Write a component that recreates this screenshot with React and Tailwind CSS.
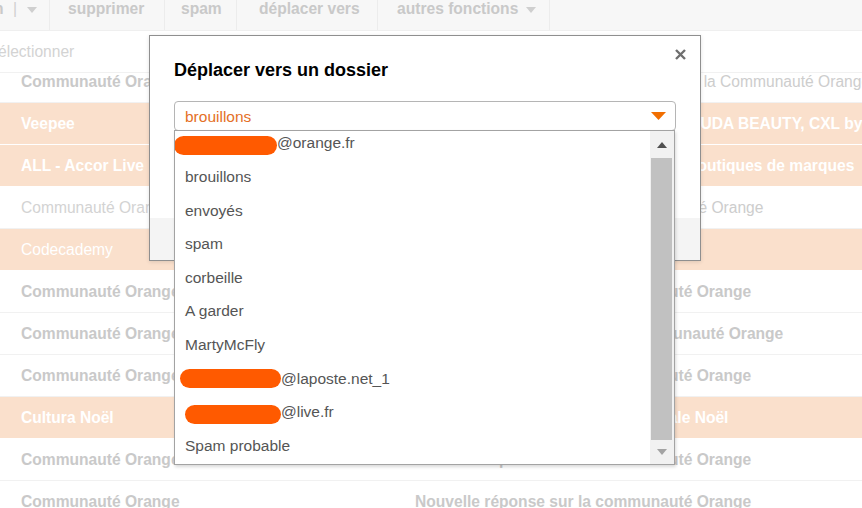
import React from "react";

const ROWS = [
    { from: "Communauté Orange", subject: "Nouvelle réponse à votre contribution sur la Communauté Orange", hi: false, bold: true, subjBold: false, short: true },
    { from: "Veepee", subject: "Jusqu'à -70% sur le maquillage avec HUDA BEAUTY, CXL by Christian Lacroix", hi: true, bold: true, subjBold: true },
    { from: "ALL - Accor Live", subject: "Profitez de vos avantages, dans nos boutiques de marques", hi: true, bold: true, subjBold: true },
    { from: "Communauté Orange", subject: "Une nouvelle réponse sur la Communauté Orange", hi: false, bold: false, subjBold: false },
    { from: "Codecademy", subject: "Votre parcours vous attend", hi: true, bold: false, subjBold: false },
    { from: "Communauté Orange", subject: "Nouvelle réponse sur la communauté Orange", hi: false, bold: true, subjBold: true },
    { from: "Communauté Orange", subject: "Une nouvelle réponse sur la communauté Orange", hi: false, bold: true, subjBold: true },
    { from: "Communauté Orange", subject: "Nouvelle réponse sur la communauté Orange", hi: false, bold: true, subjBold: true },
    { from: "Cultura Noël", subject: "Votre sélection de cadeaux : spéciale Noël", hi: true, bold: true, subjBold: true },
    { from: "Communauté Orange", subject: "Nouvelle réponse sur la communauté Orange", hi: false, bold: true, subjBold: true },
    { from: "Communauté Orange", subject: "Nouvelle réponse sur la communauté Orange", hi: false, bold: true, subjBold: true },
];

const FOLDERS = [
    { redact: "w-[103px] -ml-[11px]", text: "@orange.fr" },
    { text: "brouillons" },
    { text: "envoyés" },
    { text: "spam" },
    { text: "corbeille" },
    { text: "A garder" },
    { text: "MartyMcFly" },
    { redact: "w-[101px] -ml-[5px]", text: "@laposte.net_1" },
    { redact: "w-[96px]", text: "@live.fr", down: true },
    { text: "Spam probable" },
];

function Caret({ className }) {
    return (
        <svg width="10" height="6" viewBox="0 0 10 6" className={className}>
            <path d="M0 0 L10 0 L5 6 Z" fill="currentColor" />
        </svg>
    );
}

function Toolbar() {
    const cell = "flex items-start leading-[18px] border-r border-[#ececec]";
    return (
        <div className="h-[31px] bg-[#f7f7f7] border-b border-[#efefef] flex items-stretch text-[15.6px] font-bold text-[#c9c9c9]">
            <div className={`w-[50px] ${cell}`}>
                <span className="-ml-[6px] w-[10px] overflow-hidden">n</span>
                <span className="ml-[9px] font-normal text-[#d0d0d0]">|</span>
                <Caret className="ml-[10px] mt-[7px] text-[#cfcfcf]" />
            </div>
            <div className={`w-[115px] pl-[18px] ${cell}`}>supprimer</div>
            <div className={`w-[72px] pl-[16px] ${cell}`}>spam</div>
            <div className={`w-[141px] pl-[22px] ${cell}`}>déplacer vers</div>
            <div className={`w-[172px] pl-[19px] ${cell}`}>
                autres fonctions
                <Caret className="ml-[8px] mt-[7px] text-[#cfcfcf]" />
            </div>
        </div>
    );
}

function MailRow({ row }) {
    const base = row.hi ? "bg-[#fae0cc] border-white text-white" : "bg-white border-[#f1f1f1]";
    const fromColor = row.hi ? "" : row.bold ? "text-[#c9c9c9]" : "text-[#d3d3d3]";
    const subjColor = row.hi ? "" : row.subjBold ? "text-[#c9c9c9]" : "text-[#cdcdcd]";
    return (
        <div className={`flex border-b whitespace-nowrap text-[15.6px] ${row.short ? "h-[30px] items-start leading-[18px]" : "h-[42px] items-center"} ${base}`}>
            <div className={`w-[415px] shrink-0 pl-[21px] ${row.bold ? "font-bold" : ""} ${fromColor}`}>{row.from}</div>
            <div className={`${row.subjBold ? "font-bold" : ""} ${subjColor}`}>{row.subject}</div>
        </div>
    );
}

function FolderList() {
    return (
        <div className="absolute left-[174px] top-[130px] w-[501px] h-[335px] bg-white border border-[#a3a3a3] shadow-[1px_2px_3px_rgba(0,0,0,0.15)] flex">
            <div className="flex-1 overflow-hidden">
                <div className="-mt-[5px]">
                    {FOLDERS.map((f, i) => (
                        <div key={i} className="h-[33.67px] pl-[10px] flex items-center text-[15.5px] text-[#555555] whitespace-nowrap">
                            {f.redact && (
                                <span className={`inline-block h-[19px] rounded-full bg-[#ff5a00] ${f.redact} ${i === 0 ? "translate-y-[3px]" : ""} ${f.down ? "translate-y-[2px]" : ""}`} />
                            )}
                            <span>{f.text}</span>
                        </div>
                    ))}
                </div>
            </div>
            <div className="w-[24px] bg-[#f1f1f1] flex flex-col">
                <div className="h-[27px] flex items-center justify-center text-[#505050]">
                    <svg width="10" height="6" viewBox="0 0 10 6"><path d="M0 6 L10 6 L5 0 Z" fill="currentColor" /></svg>
                </div>
                <div className="flex-1 ml-[1px] mr-[2px] bg-[#c1c1c1]" />
                <div className="h-[24px] flex items-center justify-center text-[#a3a3a3]">
                    <Caret />
                </div>
            </div>
        </div>
    );
}

function MoveDialog() {
    return (
        <div className="absolute left-[149px] top-[35px] w-[552px] h-[226px] bg-white border border-[#8f8f8f] shadow-[0_1px_4px_rgba(0,0,0,0.12)] flex flex-col">
            <button className="absolute right-[14px] top-[13px] text-[#6f6f6f]">
                <svg width="11" height="11" viewBox="0 0 11 11">
                    <path d="M1 1 L10 10 M10 1 L1 10" stroke="currentColor" strokeWidth="2.4" />
                </svg>
            </button>
            <h2 className="pt-[23px] pl-[24px] text-[18px] leading-[22px] font-bold text-black">Déplacer vers un dossier</h2>
            <div className="mt-[20px] mx-[24px] h-[30px] border border-[#b5b5b5] rounded-[4px] flex items-center justify-between pl-[10px] pr-[9px]">
                <span className="text-[15.5px] text-[#e46f26] translate-y-[1px]">brouillons</span>
                <svg width="15" height="8" viewBox="0 0 15 8" className="text-[#f16e00]">
                    <path d="M0 0 L15 0 L7.5 8 Z" fill="currentColor" />
                </svg>
            </div>
            <div className="mt-auto h-[42px] bg-[#f4f4f4]" />
        </div>
    );
}

export default function App() {
    return (
        <div className="relative w-[862px] h-[508px] overflow-hidden bg-white font-['Liberation_Sans',Arial,sans-serif]">
            <Toolbar />
            <div className="h-[42px] border-b border-[#f1f1f1] flex items-center text-[15.6px] text-[#d3d3d3] whitespace-nowrap">
                <span className="-ml-[2px]">électionner</span>
            </div>
            {ROWS.map((r, i) => <MailRow key={i} row={r} />)}
            <MoveDialog />
            <FolderList />
        </div>
    );
}
